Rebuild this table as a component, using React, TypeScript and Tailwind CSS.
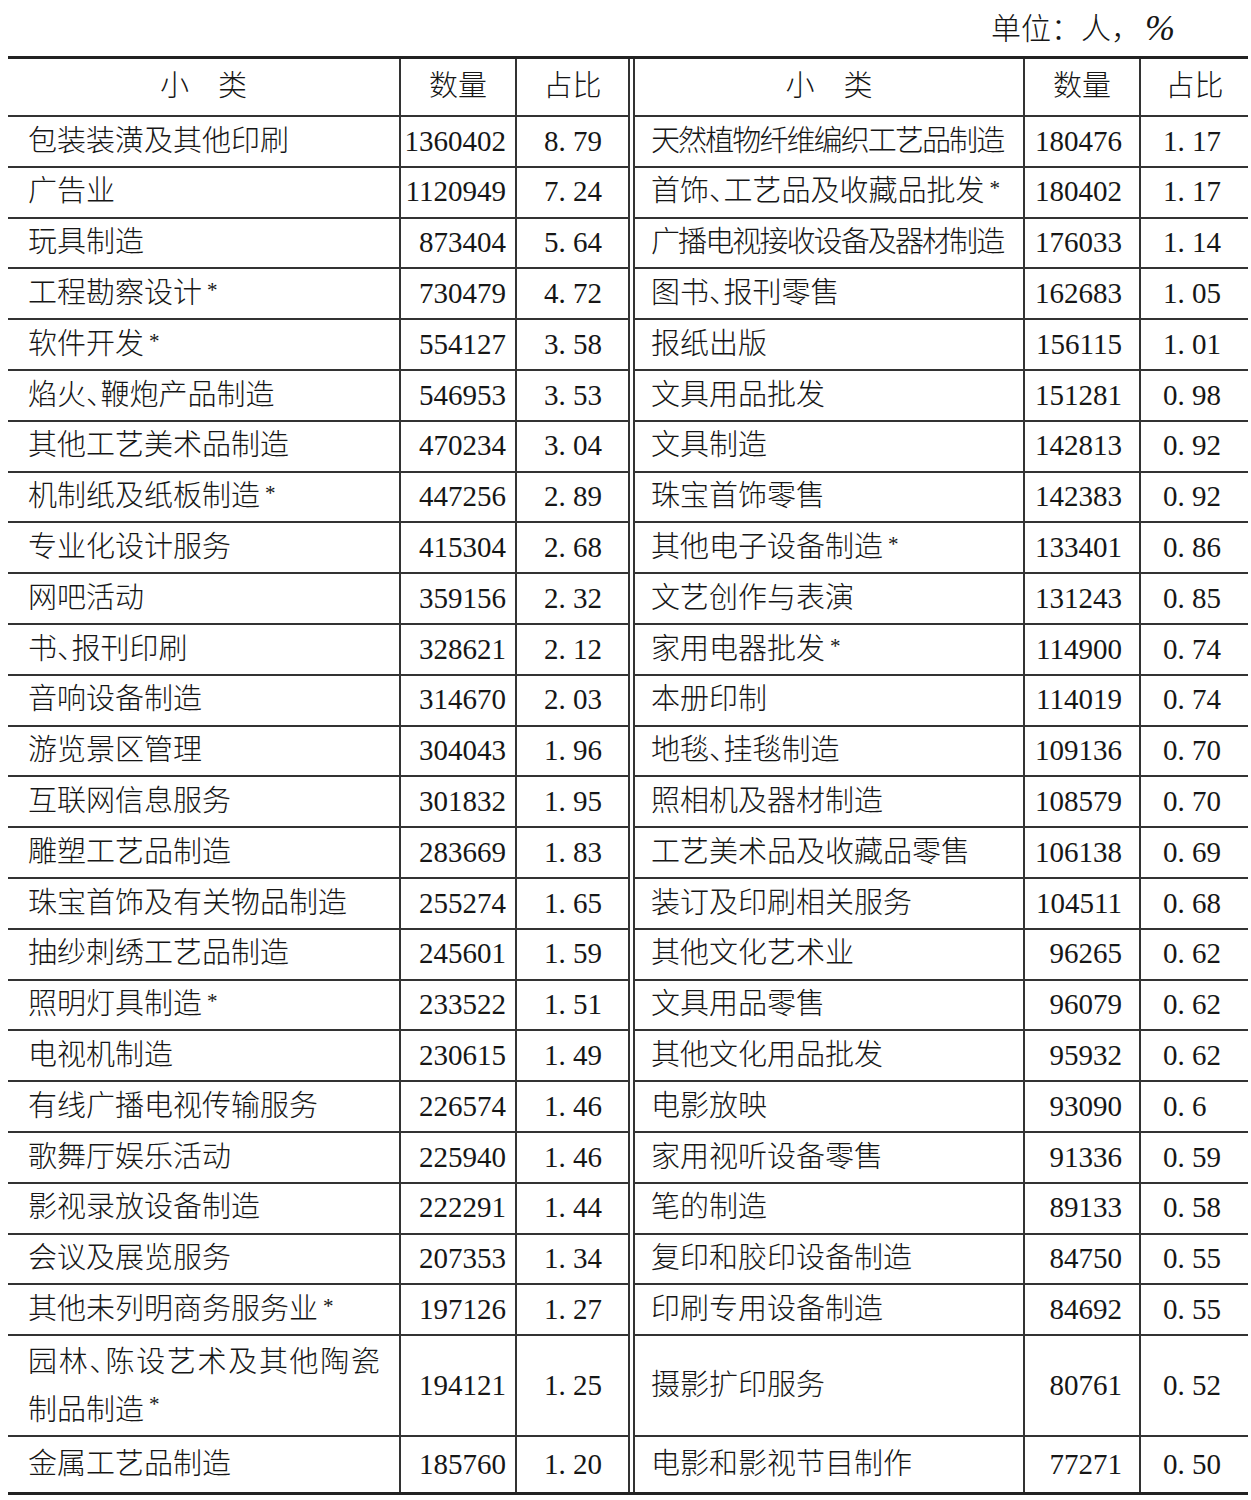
import React from "react";

type Row = { name: string; star?: boolean; num: string; pct: string };

const left: Row[] = [
  { name: "包装装潢及其他印刷", num: "1360402", pct: "8.79" },
  { name: "广告业", num: "1120949", pct: "7.24" },
  { name: "玩具制造", num: "873404", pct: "5.64" },
  { name: "工程勘察设计", star: true, num: "730479", pct: "4.72" },
  { name: "软件开发", star: true, num: "554127", pct: "3.58" },
  { name: "焰火、鞭炮产品制造", num: "546953", pct: "3.53" },
  { name: "其他工艺美术品制造", num: "470234", pct: "3.04" },
  { name: "机制纸及纸板制造", star: true, num: "447256", pct: "2.89" },
  { name: "专业化设计服务", num: "415304", pct: "2.68" },
  { name: "网吧活动", num: "359156", pct: "2.32" },
  { name: "书、报刊印刷", num: "328621", pct: "2.12" },
  { name: "音响设备制造", num: "314670", pct: "2.03" },
  { name: "游览景区管理", num: "304043", pct: "1.96" },
  { name: "互联网信息服务", num: "301832", pct: "1.95" },
  { name: "雕塑工艺品制造", num: "283669", pct: "1.83" },
  { name: "珠宝首饰及有关物品制造", num: "255274", pct: "1.65" },
  { name: "抽纱刺绣工艺品制造", num: "245601", pct: "1.59" },
  { name: "照明灯具制造", star: true, num: "233522", pct: "1.51" },
  { name: "电视机制造", num: "230615", pct: "1.49" },
  { name: "有线广播电视传输服务", num: "226574", pct: "1.46" },
  { name: "歌舞厅娱乐活动", num: "225940", pct: "1.46" },
  { name: "影视录放设备制造", num: "222291", pct: "1.44" },
  { name: "会议及展览服务", num: "207353", pct: "1.34" },
  { name: "其他未列明商务服务业", star: true, num: "197126", pct: "1.27" },
  { name: "园林、陈设艺术及其他陶瓷制品制造", star: true, num: "194121", pct: "1.25" },
  { name: "金属工艺品制造", num: "185760", pct: "1.20" },
];

const right: Row[] = [
  { name: "天然植物纤维编织工艺品制造", num: "180476", pct: "1.17" },
  { name: "首饰、工艺品及收藏品批发", star: true, num: "180402", pct: "1.17" },
  { name: "广播电视接收设备及器材制造", num: "176033", pct: "1.14" },
  { name: "图书、报刊零售", num: "162683", pct: "1.05" },
  { name: "报纸出版", num: "156115", pct: "1.01" },
  { name: "文具用品批发", num: "151281", pct: "0.98" },
  { name: "文具制造", num: "142813", pct: "0.92" },
  { name: "珠宝首饰零售", num: "142383", pct: "0.92" },
  { name: "其他电子设备制造", star: true, num: "133401", pct: "0.86" },
  { name: "文艺创作与表演", num: "131243", pct: "0.85" },
  { name: "家用电器批发", star: true, num: "114900", pct: "0.74" },
  { name: "本册印制", num: "114019", pct: "0.74" },
  { name: "地毯、挂毯制造", num: "109136", pct: "0.70" },
  { name: "照相机及器材制造", num: "108579", pct: "0.70" },
  { name: "工艺美术品及收藏品零售", num: "106138", pct: "0.69" },
  { name: "装订及印刷相关服务", num: "104511", pct: "0.68" },
  { name: "其他文化艺术业", num: "96265", pct: "0.62" },
  { name: "文具用品零售", num: "96079", pct: "0.62" },
  { name: "其他文化用品批发", num: "95932", pct: "0.62" },
  { name: "电影放映", num: "93090", pct: "0.6" },
  { name: "家用视听设备零售", num: "91336", pct: "0.59" },
  { name: "笔的制造", num: "89133", pct: "0.58" },
  { name: "复印和胶印设备制造", num: "84750", pct: "0.55" },
  { name: "印刷专用设备制造", num: "84692", pct: "0.55" },
  { name: "摄影扩印服务", num: "80761", pct: "0.52" },
  { name: "电影和影视节目制作", num: "77271", pct: "0.50" },
];

const Star = () => (
  <span className="ml-[5px] self-start mt-[8px] text-[21px] leading-none">*</span>
);

function fmtPct(p: string) {
  return p.replace(".", ". ");
}

function LeftName({ r, idx }: { r: Row; idx: number }) {
  if (idx === 24) {
    return (
      <div className="w-[352px] leading-[48px]">
        <div className="text-justify [text-align-last:justify]">园林、陈设艺术及其他陶瓷</div>
        <div className="flex">
          <span>制品制造</span>
          <Star />
        </div>
      </div>
    );
  }
  return (
    <div className="flex items-center">
      <span>{r.name}</span>
      {r.star && <Star />}
    </div>
  );
}

function RightName({ r }: { r: Row }) {
  const long = r.name.length >= 13;
  return (
    <div className="flex items-center">
      <span className={long ? "tracking-[-1.9px]" : ""}>{r.name}</span>
      {r.star && <Star />}
    </div>
  );
}

const line = "border-[#333333]";
const cols = "grid grid-cols-[391px_116px_113px_7px_388px_116px_109px]";

export default function App() {
  return (
    <div
      className="w-[1251px] h-[1500px] bg-white text-[#161616] text-[29px] font-light [font-feature-settings:'halt']"
      style={{ fontFamily: "'Liberation Serif', 'Noto Sans CJK SC', serif" }}
    >
      <div className="h-[56px] flex items-center justify-end pr-[76px] [font-feature-settings:normal] text-[30px]">
        <span>单位：人，</span>
        <span className="ml-[4px] text-[36px] italic leading-none">%</span>
      </div>
      <div className="ml-[8px] w-[1240px] border-t-[3px] border-[#222222]">
        {/* header */}
        <div className={`${cols} h-[58px]`}>
          <div className={`flex items-center justify-center border-b-2 ${line}`}>小　类</div>
          <div className={`flex items-center justify-center border-l-2 border-b-2 ${line}`}>数量</div>
          <div className={`flex items-center justify-center border-l-2 border-b-2 ${line}`}>占比</div>
          <div className={`border-l-2 border-r-2 ${line}`}></div>
          <div className={`flex items-center justify-center border-b-2 ${line}`}>小　类</div>
          <div className={`flex items-center justify-center border-l-2 border-b-2 ${line}`}>数量</div>
          <div className={`flex items-center justify-center border-l-2 border-b-2 ${line}`}>占比</div>
        </div>
        {left.map((l, i) => {
          const r = right[i];
          const last = i === left.length - 1;
          const h = i === 24 ? "h-[101px]" : last ? "h-[55px]" : "h-[50.8px]";
          const bb = last ? "" : "border-b-2";
          return (
            <div key={i} className={`${cols} ${h}`}>
              <div className={`flex items-center pl-[20px] ${bb} ${line}`}>
                <LeftName r={l} idx={i} />
              </div>
              <div className={`flex items-center justify-end pr-[9px] border-l-2 ${bb} ${line}`}>
                {l.num}
              </div>
              <div className={`flex items-center pl-[27px] border-l-2 ${bb} ${line}`}>
                {fmtPct(l.pct)}
              </div>
              <div className={`border-l-2 border-r-2 ${line}`}></div>
              <div className={`flex items-center pl-[16px] ${bb} ${line}`}>
                <RightName r={r} />
              </div>
              <div className={`flex items-center justify-end pr-[17px] border-l-2 ${bb} ${line}`}>
                {r.num}
              </div>
              <div className={`flex items-center pl-[22px] border-l-2 ${bb} ${line}`}>
                {fmtPct(r.pct)}
              </div>
            </div>
          );
        })}
        <div className="h-[3px] bg-[#222222]"></div>
      </div>
    </div>
  );
}
